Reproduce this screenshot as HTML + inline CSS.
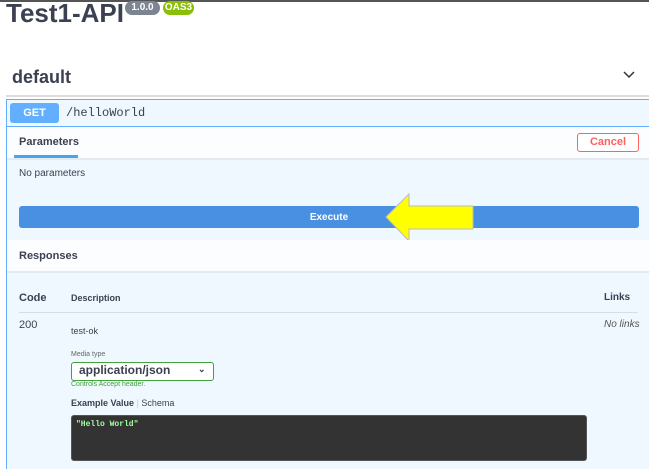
<!DOCTYPE html>
<html><head><style>
*{margin:0;padding:0;box-sizing:border-box}
body{width:649px;height:464px;overflow:hidden;background:#fff;font-family:"Liberation Sans",sans-serif;color:#3b4151;position:relative}
.a{position:absolute}
</style></head><body>
<div class="a" style="left:0;top:0;width:649px;height:2px;background:#555"></div>
<div class="a" style="left:6px;top:-2px;font-size:26px;font-weight:bold;color:#3b4151">Test1-API</div>
<div class="a" style="left:125px;top:1px;width:35px;height:14px;background:#7d8492;border-radius:7px;color:#fff;font-size:10px;font-weight:bold;text-align:center;line-height:14px">1.0.0</div>
<div class="a" style="left:163px;top:1px;width:31px;height:14px;background:#89bf04;border-radius:7px;color:#fff;font-size:10px;font-weight:bold;text-align:center;line-height:14px">OAS3</div>
<div class="a" style="left:12px;top:67px;font-size:18px;font-weight:bold">default</div>
<svg class="a" style="left:622px;top:70px" width="14" height="10"><path d="M2 2 L7 7 L12 2" stroke="#333" stroke-width="1.5" fill="none"/></svg>
<div class="a" style="left:6px;top:95px;width:643px;height:2px;background:#ddd"></div>
<div class="a" style="left:6px;top:99px;width:650px;height:370px;background:#eff7ff;border:1px solid #61affe;border-right:none;border-bottom:none"></div>
<div class="a" style="left:7px;top:126px;width:642px;height:1px;background:#61affe"></div>
<div class="a" style="left:10px;top:103px;width:49px;height:20px;background:#61affe;border-radius:3px;color:#fff;font-size:11px;font-weight:bold;text-align:center;line-height:20px">GET</div>
<div class="a" style="left:66px;top:106px;font-family:'Liberation Mono',monospace;font-size:12px">/helloWorld</div>
<div class="a" style="left:7px;top:127px;width:642px;height:31px;background:#fcfdff"></div>
<div class="a" style="left:19px;top:136px;font-size:11px;font-weight:bold">Parameters</div>
<div class="a" style="left:14px;top:155px;width:64px;height:3px;background:#49a4f0"></div>
<div class="a" style="left:577px;top:133px;width:62px;height:19px;border:1.5px solid #ff6060;border-radius:3px;background:#fff;color:#ff6060;font-size:11px;font-weight:bold;text-align:center;line-height:16px">Cancel</div>
<div class="a" style="left:7px;top:158px;width:642px;height:2px;background:#e4eaf0"></div>
<div class="a" style="left:19px;top:168px;font-size:10px">No parameters</div>
<div class="a" style="left:19px;top:206px;width:620px;height:22px;background:#4990e2;border-radius:3px;color:#fff;font-size:10px;font-weight:bold;text-align:center;line-height:23px">Execute</div>
<svg class="a" style="left:384px;top:192px" width="92" height="52"><polygon points="2,25 25,2 25,14 89,14 89,37 25,37 25,49" fill="#ffff00" stroke="#bbb" stroke-width="1"/></svg>
<div class="a" style="left:7px;top:240px;width:642px;height:32px;background:#fcfdff"></div>
<div class="a" style="left:19px;top:250px;font-size:11px;font-weight:bold">Responses</div>
<div class="a" style="left:7px;top:271px;width:642px;height:2px;background:#e4eaf0"></div>
<div class="a" style="left:19px;top:292px;font-size:11px;font-weight:bold">Code</div>
<div class="a" style="left:71px;top:293px;font-size:9px;font-weight:bold">Description</div>
<div class="a" style="left:604px;top:292px;font-size:10px;font-weight:bold">Links</div>
<div class="a" style="left:19px;top:312px;width:619px;height:1px;background:#d8dde3"></div>
<div class="a" style="left:19px;top:319px;font-size:11px">200</div>
<div class="a" style="left:71px;top:326px;font-size:9px">test-ok</div>
<div class="a" style="left:604px;top:319px;font-size:10px;font-style:italic;color:#555">No links</div>
<div class="a" style="left:71px;top:351px;font-size:7px;color:#666">Media type</div>
<div class="a" style="left:71px;top:362px;width:143px;height:19px;border:1.5px solid #41a13a;border-radius:3px;background:#fff;font-size:12px;font-weight:bold;padding-left:7px;line-height:15px">application/json<span style="position:absolute;left:126px;top:-1px;font-size:9px">⌄</span></div>
<div class="a" style="left:71px;top:381px;font-size:7px;color:#41a13a">Controls Accept header.</div>
<div class="a" style="left:71px;top:398px;font-size:9px;font-weight:bold">Example Value <span style="font-weight:normal;color:#ccc">|</span> <span style="font-weight:normal">Schema</span></div>
<div class="a" style="left:71px;top:415px;width:516px;height:46px;background:#333;border-radius:3px;border:1px solid #555"></div>
<div class="a" style="left:76px;top:420px;font-family:'Liberation Mono',monospace;font-size:8px;font-weight:bold;color:#a2fca2">"Hello World"</div>
</body></html>
